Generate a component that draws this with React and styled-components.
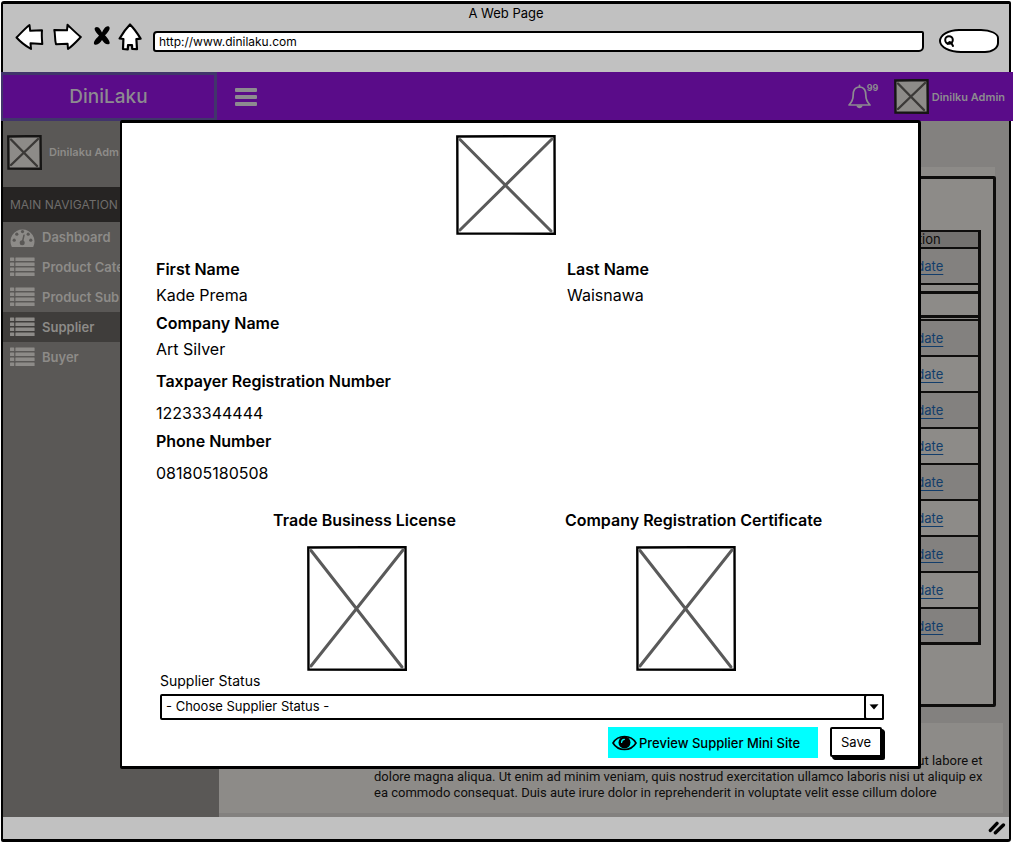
import React from "react";
import styled, { createGlobalStyle } from "styled-components";

const GlobalStyle = createGlobalStyle`
  *, *::before, *::after { box-sizing: border-box; }
  body { margin: 0; background: #ffffff; color: #000000; font: 400 13px/16px Inter, "Liberation Sans", sans-serif; }
  button, input, select { font: inherit; color: inherit; }
  dl, dd, dt, figure, p, h1, h2, ul { margin: 0; padding: 0; }
`;

const Window = styled.div`
  display: flex;
  flex-direction: column;
  min-height: calc(100vh - 2px);
  margin: 1px 2px 1px 1px;
  border: solid #000000;
  border-width: 3px 2px;
  border-radius: 3px 2px 3px 2px;
`;

const Chrome = styled.div`
  height: 68px;
  background: #c1c1c1;
`;

const ChromeTitle = styled.p`
  padding-top: 1px;
  text-align: center;
`;

const ChromeRow = styled.div`
  display: flex;
  align-items: center;
  height: 32px;
  padding: 0 10px 0 12px;
`;

const ToolButton = styled.button`
  display: flex;
  padding: 0;
  margin-right: ${(p) => p.$gap}px;
  border: 0;
  background: none;
`;

const Address = styled.input`
  flex: 1;
  min-width: 0;
  height: 21px;
  margin-top: 8px;
  padding: 0 4px;
  border: 2px solid #000000;
  border-radius: 4px 2px 5px 3px;
  background: #ffffff;
  font-size: 12px;
`;

const SearchPill = styled.label`
  display: flex;
  align-items: center;
  width: 60px;
  height: 24px;
  margin: 8px 0 0 15px;
  padding-left: 3px;
  border: 2px solid #000000;
  border-radius: 20px 18px 14px 22px / 12px 9px 10px 12px;
  background: #ffffff;

  input {
    width: 34px;
    border: 0;
    padding: 0;
    outline: 0;
    background: transparent;
  }
`;

const Header = styled.header`
  display: flex;
  align-items: center;
  height: 49px;
  margin: 0 -4px 0 -2px;
  background: #5a0c89;
  color: #8d8b90;
`;

const Brand = styled.div`
  width: 216px;
  height: 49px;
  border: 3px solid #41356b;
  border-left-width: 2px;
  font-size: 19px;
  font-weight: 500;
  line-height: 44px;
  text-align: center;
`;

const Hamburger = styled.button`
  display: grid;
  gap: 3px;
  width: 22px;
  margin-left: 18px;
  padding: 0;
  border: 0;
  background: none;

  span {
    height: 4px;
    border-radius: 1px;
    background: #8d8b90;
  }
`;

const BellButton = styled.button`
  display: flex;
  align-items: flex-start;
  width: 30px;
  height: 28px;
  margin: 0 16px 0 auto;
  padding: 0;
  border: 0;
  background: none;
  font-size: 9px;
  font-weight: 700;
  line-height: 10px;

  svg { flex: none; margin-right: -4px; }
`;

const UserName = styled.span`
  font-size: 11px;
  font-weight: 600;
  white-space: nowrap;
`;

const HeaderUser = styled.div`
  display: flex;
  align-items: center;
  gap: 3px;
  padding-right: 8px;
`;

const Body = styled.div`
  position: relative;
  display: flex;
  flex: 1;
  min-height: 695px;
`;

const Sidebar = styled.aside`
  flex: none;
  width: 216px;
  overflow: hidden;
  background: #5a5856;
  color: #8d8b88;
`;

const SidebarUser = styled.div`
  display: flex;
  align-items: center;
  gap: 7px;
  height: 66px;
  padding: 0 4px 4px;
`;

const NavTitle = styled.h2`
  padding: 0 7px;
  background: #262423;
  color: #6f6d6b;
  font-size: 12px;
  font-weight: 400;
  line-height: 35px;
`;

const NavLink = styled.a`
  display: flex;
  align-items: center;
  gap: 7px;
  height: 30px;
  padding-left: 7px;
  background: ${(p) => (p.$active ? "#3f3d3b" : "transparent")};
  color: inherit;
  font-weight: 600;
  text-decoration: none;
  white-space: nowrap;
`;

const Main = styled.main`
  flex: 1;
  min-width: 0;
  padding-top: 46px;
  background: #83817f;
`;

const Sheet = styled.div`
  margin: 0 14px 0 12px;
  padding-top: 9px;
  background: #8d8b88;
`;

const Panel = styled.section`
  height: 531px;
  margin-right: -1px;
  padding: 51px 12px 0;
  border: 3px solid #0e0d0c;
  border-radius: 2px;
`;

const Table = styled.table`
  width: 100%;
  border-spacing: 0;
  border: 2px solid #0e0d0c;
  border-right-width: 3px;
  border-bottom-width: 3px;
  table-layout: fixed;
`;

const HeadCell = styled.th`
  width: ${(p) => p.$width || "auto"};
  height: 17px;
  padding: 0;
  border-bottom: 2px solid #0e0d0c;
  background: #73716f;
  color: #0e0d0c;
  font-size: 13px;
  font-weight: 400;
  line-height: 15px;
`;

const Cell = styled.td`
  height: ${(p) => (p.$last ? 33 : 36)}px;
  padding: 0;
  border-bottom: ${(p) => (p.$last ? 0 : 2)}px solid #0e0d0c;
  background: ${(p) => (p.$dark ? "#83817f" : "#8d8b88")};
  text-align: center;
`;

const GapCell = styled.td`
  height: 36px;
  padding: 6px 0 1px;
  border-bottom: 2px solid #0e0d0c;
  background: #8d8b88;
`;

const GapBox = styled.div`
  height: 27px;
  margin: 0 -3px;
  border: 3px solid #0e0d0c;
  border-radius: 3px;
`;

const UpdateLink = styled.a`
  color: #123d6b;
  text-decoration: underline;
  text-underline-offset: 3px;
`;

const Note = styled.section`
  margin: 16px 6px 4px 0;
  padding: 30px 8px 12px 155px;
  background: #8d8b88;
  color: #0e0d0c;
  font-family: Roboto, "Liberation Sans", sans-serif;
  white-space: nowrap;
`;

const NoteText = styled.p`
  width: fit-content;
`;

const NoteLine = styled.span`
  display: block;
  text-align: ${(p) => p.$align || "left"};
`;

const StatusBar = styled.footer`
  display: flex;
  align-items: center;
  justify-content: flex-end;
  height: 22px;
  padding-right: 3px;
  background: #c1c1c1;
`;

const Modal = styled.div`
  position: absolute;
  top: -1px;
  left: 117px;
  right: 88px;
  padding: 12px 34px 6px;
  border: 3px solid #000000;
  border-left-width: 2px;
  border-radius: 2px 3px 2px 2px;
  background: #ffffff;
`;

const Photo = styled.div`
  display: flex;
  justify-content: center;
  padding-right: 28px;
`;

const Fields = styled.dl`
  display: grid;
  grid-template-columns: 411px 1fr;
  row-gap: 2px;
  margin-top: 21px;
  font-size: 16px;
  line-height: 26px;
`;

const Field = styled.div`
  grid-column: ${(p) => p.$column || 1};
  display: grid;
  gap: ${(p) => (p.$roomy ? 6 : 0)}px;

  dt { font-weight: 600; }
`;

const FieldBreak = styled.div`
  grid-column: 1 / -1;
  height: 2px;
`;

const Documents = styled.div`
  display: grid;
  grid-template-columns: 1fr 1fr;
  margin: 21px 26px 0 44px;
`;

const DocumentCard = styled.figure`
  display: flex;
  flex-direction: column;
  align-items: center;
  gap: 13px;
  font-size: 16px;
  font-weight: 600;
  line-height: 26px;
  white-space: nowrap;

  svg { margin-right: 16px; }
`;

const StatusLabel = styled.label`
  display: block;
  margin: 1px 0 4px 4px;
  font-size: 14px;
  line-height: 18px;
`;

const SelectBox = styled.div`
  display: grid;
  align-items: center;
  margin: 0 0 0 4px;

  > * { grid-area: 1 / 1; }
`;

const Select = styled.select`
  width: 100%;
  height: 26px;
  padding: 0 4px 2px;
  border: 2px solid #000000;
  border-radius: 2px;
  appearance: none;
  background: #ffffff;
`;

const SelectArrow = styled.span`
  display: flex;
  align-items: center;
  justify-content: center;
  justify-self: end;
  width: 20px;
  height: 26px;
  border: 2px solid #000000;
  border-radius: 3px 2px 2px 3px;
  pointer-events: none;
`;

const Actions = styled.div`
  display: flex;
  justify-content: flex-end;
  gap: 12px;
  margin-top: 7px;
`;

const PreviewButton = styled.button`
  display: flex;
  align-items: center;
  gap: 2px;
  width: 210px;
  height: 31px;
  padding: 0 4px;
  border: 0;
  background: #00ffff;
  font-size: 13px;
  font-weight: 500;
  white-space: nowrap;
`;

const SaveButton = styled.button`
  width: 52px;
  height: 30px;
  margin: 0 2px 3px 0;
  padding: 0;
  border: 2px solid #000000;
  border-radius: 2px;
  background: #ffffff;
  box-shadow: 2px 2px 0 #000000, 3px 3px 0 #000000;
  font-size: 13px;
`;

function Placeholder({ width, height, dim }) {
  const frame = dim ? "#161514" : "#000000";
  const w = width;
  const h = height;
  return (
    <svg width={w} height={h} viewBox={`0 0 ${w} ${h}`} aria-hidden="true">
      <path d={`M1.3 1.5 L${w - 1.5} 1 L${w - 1.2} ${h - 1.3} L1.5 ${h - 1.5}Z`} fill={dim ? "#8d8b88" : "#fff"} stroke={frame} strokeWidth="2.4" />
      <path d={`M4 4.5 L${w - 5} ${h - 4} M${w - 4} 4 L4 ${h - 5}`} stroke={dim ? "#3b3937" : "#5a5a5a"} strokeWidth={dim ? 2.4 : 3} strokeLinecap="round" />
    </svg>
  );
}

function ListIcon() {
  return (
    <svg width="25" height="20" viewBox="0 0 25 20" fill="#8d8b88" aria-hidden="true">
      {[0, 5, 10, 15].map((y) => (
        <g key={y}>
          <rect x="0" y={y + 0.5} width="4.2" height="3.6" rx=".5" />
          <rect x="5.4" y={y + 0.5} width="19.2" height="3.6" rx=".5" />
        </g>
      ))}
    </svg>
  );
}

function GaugeIcon() {
  return (
    <svg width="25" height="20" viewBox="0 0 25 20" aria-hidden="true">
      <path d="M1.6 19.5 A12 12 0 1 1 23.4 19.5 Q23.2 20 22.5 20 H2.5 Q1.8 20 1.6 19.5Z" fill="#8d8b88" />
      <g fill="#5a5856">
        <circle cx="4.2" cy="13.2" r="1.6" />
        <circle cx="6.8" cy="7.2" r="1.6" />
        <circle cx="12.5" cy="4.6" r="1.6" />
        <circle cx="18.2" cy="7.2" r="1.6" />
        <circle cx="20.8" cy="13.2" r="1.6" />
        <circle cx="12.2" cy="15.8" r="2.5" />
      </g>
      <path d="M12.3 15.5 L14 8.2" stroke="#5a5856" strokeWidth="1.5" strokeLinecap="round" />
    </svg>
  );
}

const NAV = [
  { label: "Dashboard", Icon: GaugeIcon },
  { label: "Product Cate", Icon: ListIcon },
  { label: "Product Sub", Icon: ListIcon },
  { label: "Supplier", Icon: ListIcon, active: true },
  { label: "Buyer", Icon: ListIcon },
];

const ROWS = [1, 2, 3, 4, 5, 6, 7, 8, 9];

export default function App() {
  return (
    <>
      <GlobalStyle />
      <Window>
        <Chrome>
          <ChromeTitle>A Web Page</ChromeTitle>
          <ChromeRow>
            <ToolButton $gap={9} aria-label="Back">
              <svg width="29" height="28" viewBox="0 0 29 28" fill="#fff" stroke="#000" strokeWidth="2" strokeLinejoin="round">
                <path d="M1.5 14.5 C6 10 10 5.5 14.5 2 L15.2 7.8 L27 7.3 C26.5 12 27 17 27.3 21 L15.5 20.3 L16 26 C10 22.5 5 18.5 1.5 14.5Z" />
              </svg>
            </ToolButton>
            <ToolButton $gap={11} aria-label="Forward">
              <svg width="29" height="28" viewBox="0 0 29 28" fill="#fff" stroke="#000" strokeWidth="2" strokeLinejoin="round">
                <path d="M1.3 7 L14 7.3 L14.5 1.8 C19 6 23 10 27.8 14 C24 18 20 22.5 15 26 L14.6 20.8 L3 21.2 C1.6 17 2.4 11 1.3 7Z" />
              </svg>
            </ToolButton>
            <ToolButton $gap={7} aria-label="Stop">
              <svg width="18" height="24" viewBox="0 0 18 24" fill="#000">
                <path d="M2.2 2.6 C5.4 .6 7.4 4.6 9 7.4 C11 3.6 13 .4 15.8 1.4 C18.4 3.4 14.6 7.6 12 10.2 C14.4 13 18 17 16.2 19 C13.4 20.4 10.6 17.4 9 15 C7.2 18 4 21 1.2 19.2 C-.2 17 3.6 13.4 6 10.6 C3.6 8 .2 4.6 2.2 2.6Z" />
              </svg>
            </ToolButton>
            <ToolButton $gap={11} aria-label="Home">
              <svg width="24" height="28" viewBox="0 0 24 28" fill="#fff" stroke="#000" strokeWidth="2.2" strokeLinejoin="round">
                <path d="M12 1.5 C8 5.5 4.5 10.5 1.6 15.5 L5.4 16 L5 26 L9.8 26.4 L10 22.2 L14 22 L14.2 26 L19 26.2 L18.4 16.2 L22.6 15.6 C19.5 10.5 16 5.5 12 1.5Z" />
              </svg>
            </ToolButton>
            <Address aria-label="Address" defaultValue="http://www.dinilaku.com" />
            <SearchPill>
              <svg width="12" height="14" viewBox="0 0 12 14" fill="none" stroke="#000" strokeWidth="2" strokeLinecap="round">
                <circle cx="5" cy="6" r="3.8" />
                <path d="M3.6 9.8 L5.6 8 M7 8.4 L9 12" />
              </svg>
              <input aria-label="Search" />
            </SearchPill>
          </ChromeRow>
        </Chrome>

        <Header>
          <Brand>DiniLaku</Brand>
          <Hamburger aria-label="Menu">
            <span />
            <span />
            <span />
          </Hamburger>
          <BellButton aria-label="Notifications">
            <svg width="23" height="27" viewBox="0 0 23 27" fill="none" stroke="#8d8b90" strokeWidth="1.7" strokeLinejoin="round">
              <path d="M11.5 4 C6.5 4 5.2 8 5.2 12 C5.2 17 3.6 19.4 1 22 H22 C19.4 19.4 17.8 17 17.8 12 C17.8 8 16.5 4 11.5 4Z" />
              <path d="M11.5 4 V2.4" strokeLinecap="round" />
              <path d="M8.4 22.6 C9 26.2 14 26.2 14.6 22.6Z" fill="#8d8b90" stroke="none" />
            </svg>
            99
          </BellButton>
          <HeaderUser>
            <Placeholder width={35} height={35} dim />
            <UserName>Dinilku Admin</UserName>
          </HeaderUser>
        </Header>

        <Body>
          <Sidebar>
            <SidebarUser>
              <Placeholder width={35} height={35} dim />
              <UserName>Dinilaku Adm</UserName>
            </SidebarUser>
            <NavTitle>MAIN NAVIGATION</NavTitle>
            <nav>
              {NAV.map(({ label, Icon, active }) => (
                <NavLink key={label} href="#" $active={active}>
                  <Icon />
                  {label}
                </NavLink>
              ))}
            </nav>
          </Sidebar>

          <Main>
            <Sheet>
              <Panel>
                <Table>
                  <thead>
                    <tr>
                      <HeadCell>Supplier</HeadCell>
                      <HeadCell $width="114px">Action</HeadCell>
                    </tr>
                  </thead>
                  <tbody>
                    <tr>
                      <Cell $dark />
                      <Cell $dark><UpdateLink href="#">Update</UpdateLink></Cell>
                    </tr>
                    <tr>
                      <GapCell colSpan={2}><GapBox /></GapCell>
                    </tr>
                    {ROWS.map((n, i) => (
                      <tr key={n}>
                        <Cell $dark={i % 2 === 0} $last={i === ROWS.length - 1} />
                        <Cell $dark={i % 2 === 0} $last={i === ROWS.length - 1}>
                          <UpdateLink href="#">Update</UpdateLink>
                        </Cell>
                      </tr>
                    ))}
                  </tbody>
                </Table>
              </Panel>
            </Sheet>
            <Note>
              <NoteText>
                <NoteLine $align="right">Lorem ipsum dolor sit amet, consectetur adipisicing elit, sed do eiusmod tempor incididunt ut labore et</NoteLine>
                <NoteLine>dolore magna aliqua. Ut enim ad minim veniam, quis nostrud exercitation ullamco laboris nisi ut aliquip ex</NoteLine>
                <NoteLine>ea commodo consequat. Duis aute irure dolor in reprehenderit in voluptate velit esse cillum dolore</NoteLine>
              </NoteText>
            </Note>
          </Main>

          <Modal role="dialog" aria-label="Supplier detail">
            <Photo>
              <Placeholder width={100} height={100} />
            </Photo>
            <Fields>
              <Field>
                <dt>First Name</dt>
                <dd>Kade Prema</dd>
              </Field>
              <Field $column={2}>
                <dt>Last Name</dt>
                <dd>Waisnawa</dd>
              </Field>
              <Field>
                <dt>Company Name</dt>
                <dd>Art Silver</dd>
              </Field>
              <FieldBreak />
              <Field $roomy>
                <dt>Taxpayer Registration Number</dt>
                <dd>12233344444</dd>
              </Field>
              <Field $roomy>
                <dt>Phone Number</dt>
                <dd>081805180508</dd>
              </Field>
            </Fields>
            <Documents>
              <DocumentCard>
                <figcaption>Trade Business License</figcaption>
                <Placeholder width={100} height={125} />
              </DocumentCard>
              <DocumentCard>
                <figcaption>Company Registration Certificate</figcaption>
                <Placeholder width={100} height={125} />
              </DocumentCard>
            </Documents>
            <StatusLabel htmlFor="supplier-status">Supplier Status</StatusLabel>
            <SelectBox>
              <Select id="supplier-status" defaultValue="">
                <option value="">- Choose Supplier Status -</option>
              </Select>
              <SelectArrow>
                <svg width="10" height="6" viewBox="0 0 10 6"><path d="M.5 .5 L9.5 .3 L5 5.6Z" fill="#000" /></svg>
              </SelectArrow>
            </SelectBox>
            <Actions>
              <PreviewButton>
                <svg width="25" height="16" viewBox="0 0 25 16" fill="none" stroke="#000" strokeWidth="1.6">
                  <path d="M1 8 C6 -.6 19 -.6 24 8 C19 16.6 6 16.6 1 8Z" />
                  <circle cx="12.5" cy="7.6" r="6" fill="#000" stroke="none" />
                  <path d="M9.6 7.4 A3 3 0 0 1 12.4 4.4" stroke="#00ffff" strokeWidth="1.2" strokeLinecap="round" />
                </svg>
                Preview Supplier Mini Site
              </PreviewButton>
              <SaveButton>Save</SaveButton>
            </Actions>
          </Modal>
        </Body>

        <StatusBar>
          <svg width="18" height="14" viewBox="0 0 18 14" stroke="#000" strokeWidth="3.4" strokeLinecap="round" aria-hidden="true">
            <path d="M2.4 9.4 L9 2.4 M7.4 11.8 L15.4 4" />
          </svg>
        </StatusBar>
      </Window>
    </>
  );
}
